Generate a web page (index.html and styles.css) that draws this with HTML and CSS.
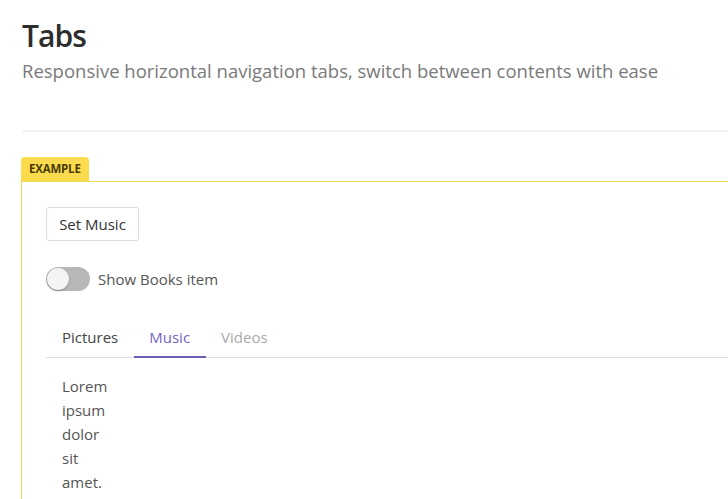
FILE: index.html
```html
<!DOCTYPE html>
<html lang="en">
<head>
<meta charset="utf-8">
<title>Tabs</title>
<link rel="stylesheet" href="styles.css">
</head>
<body>
<div class="page">
  <header class="head">
    <h1 class="title">Tabs</h1>
    <p class="subtitle">Responsive horizontal navigation tabs, switch between contents with ease</p>
  </header>
  <hr class="divider">
  <section class="example">
    <div class="example-label">EXAMPLE</div>
    <div class="example-box">
      <div class="controls">
        <button class="btn">Set Music</button>
        <label class="toggle-row">
          <span class="toggle"><span class="knob"></span></span>
          <span class="toggle-text">Show Books item</span>
        </label>
      </div>
      <nav class="tabs">
        <span class="tab">Pictures</span>
        <span class="tab active">Music</span>
        <span class="tab disabled">Videos</span>
      </nav>
      <div class="panel">
        <p class="panel-text">Lorem ipsum dolor sit amet.</p>
      </div>
    </div>
  </section>
</div>
</body>
</html>
```
FILE: styles.css
```css
html, body {
  margin: 0;
  padding: 0;
  background: #fff;
}
body {
  font-family: "Open Sans", "Noto Sans", sans-serif;
  color: #333;
  overflow: hidden;
}
.page {
  padding-left: 22px;
}
.head {
  padding-top: 16px;
}
.title {
  margin: 0;
  font-size: 30px;
  line-height: 40px;
  font-weight: 600;
  color: #2d2d2d;
  letter-spacing: -0.9px;
}
.subtitle {
  margin: 3px 0 0;
  font-size: 18.5px;
  line-height: 24px;
  color: #7a7a7a;
  white-space: nowrap;
}
.divider {
  margin: 47px 0 0;
  border: 0;
  height: 2px;
  background: #f3f3f3;
}
.example {
  margin-top: 24px;
  margin-left: -1px;
}
.example-label {
  display: inline-block;
  background: #fcdb4e;
  color: #4a3d00;
  font-size: 11.5px;
  font-weight: 700;
  line-height: 24px;
  height: 24px;
  padding: 0 8px;
  border-radius: 4px 4px 0 0;
  letter-spacing: -0.2px;
}
.example-box {
  border: 1px solid #ecdb50;
  border-right: 0;
  padding: 25px 0 20px 24px;
}
.controls {
  display: flex;
  flex-direction: column;
  align-items: flex-start;
  gap: 26px;
}
.btn {
  font-family: inherit;
  font-size: 15px;
  color: #333;
  background: #fff;
  border: 1px solid #dcdcdc;
  border-radius: 3px;
  height: 34px;
  width: 93px;
  padding: 0;
}
.toggle-row {
  display: flex;
  align-items: center;
  gap: 8px;
}
.toggle {
  width: 44px;
  height: 24px;
  border-radius: 12px;
  background: #b8b8b8;
  display: flex;
  align-items: center;
  padding-left: 1px;
  box-sizing: border-box;
}
.knob {
  width: 22px;
  height: 22px;
  border-radius: 50%;
  background: #f4f4f4;
  box-shadow: 0 1px 2px rgba(0,0,0,0.3);
}
.toggle-text {
  font-size: 15px;
  color: #555;
}
.tabs {
  display: flex;
  margin-top: 28px;
  border-bottom: 1px solid #ddd;
}
.tab {
  padding: 0 15.5px;
  font-size: 15px;
  line-height: 37px;
  color: #444;
  border-bottom: 2px solid transparent;
  margin-bottom: -1px;
}
.tab:first-child {
  padding-left: 16px;
}
.tab.active {
  color: #7563c4;
  border-bottom-color: #6d5db6;
}
.tab.disabled {
  color: #aaa;
}
.panel {
  padding: 16px 16px 0;
}
.panel-text {
  margin: 0;
  width: min-content;
  font-size: 15px;
  line-height: 24px;
  color: #555;
}
```
